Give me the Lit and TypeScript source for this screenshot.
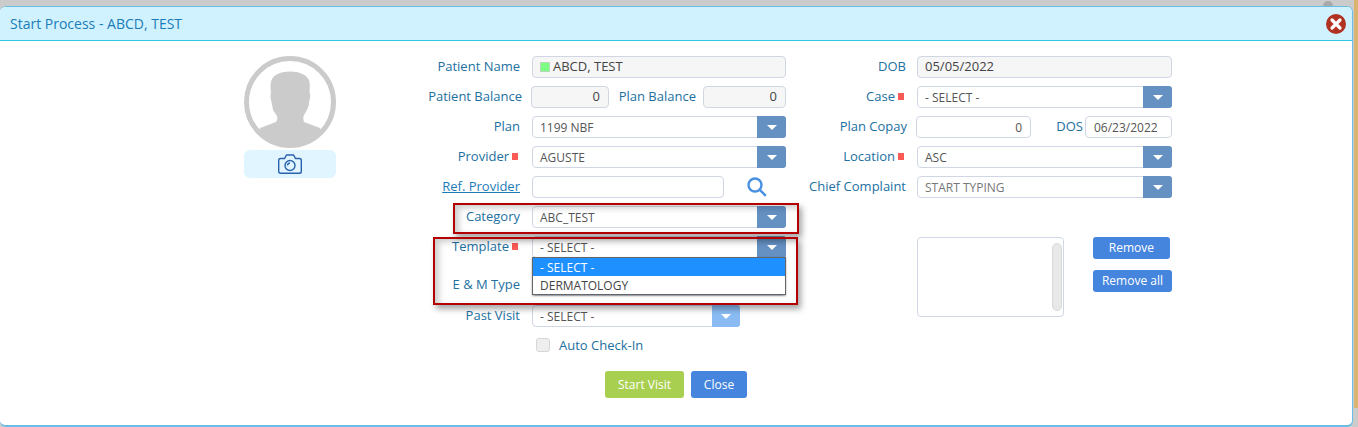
import { LitElement, html, css } from "lit";
import { customElement } from "lit/decorators.js";

const arrow = html`<span class="arr"><i></i></span>`;

@customElement("app-root")
export class AppRoot extends LitElement {
  static styles = css`
    :host { display: block; position: relative; width: 1358px; height: 427px; overflow: hidden; background: #cbcbcb; font-family: "Open Sans", sans-serif; box-sizing: border-box; padding: 6px 5px 0 0; }
    * { box-sizing: border-box; }
    .strip { position: absolute; right: 0; top: 0; width: 4px; height: 408px; background: #d9b36f; }
    .knob { position: absolute; left: 1323px; top: 1px; width: 10px; height: 10px; border-radius: 50%; background: #a9a9a9; }
    .modal { position: relative; height: 421px; background: #fff; border: solid #6cbde6; border-width: 1px 1px 2px 0; border-radius: 6px; overflow: hidden; }
    .header { height: 34px; background: #d0f2ff; border-bottom: 1px solid #2ec6e0; display: flex; align-items: center; justify-content: space-between; padding: 0 6px 0 10px; color: #1c7cb8; font-size: 14px; }
    .x { display: block; width: 20px; height: 20px; margin-top: 1px; }
    .body { display: flex; padding: 15px 0 0 244px; }
    .photo { width: 92px; display: flex; flex-direction: column; gap: 2px; }
    .avatar { display: block; width: 92px; height: 92px; }
    .cam { height: 28px; background: #e0f5ff; border-radius: 6px; display: flex; align-items: center; justify-content: center; }
    .cam svg { display: block; width: 24px; height: 20px; }
    .left { position: relative; width: 366px; margin-left: 84px; }
    .right { width: 363px; margin-left: 23px; }
    .row { display: flex; align-items: center; height: 22px; margin-bottom: 8px; }
    label { color: #22709f; font-size: 13px; white-space: nowrap; display: flex; align-items: center; justify-content: flex-end; padding-bottom: 2px; }
    .l1 { width: 100px; margin-right: 12px; }
    .r1 { width: 97px; margin-right: 11px; }
    .req::after { content: ""; width: 6px; height: 7px; background: #fb5a55; margin-left: 3px; margin-right: 2px; }
    .f { height: 22px; border: 1px solid #d0d6e4; border-radius: 4px; background: #fff; color: #555; font-size: 12px; display: flex; align-items: center; padding-left: 7px; position: relative; white-space: nowrap; }
    .ro { background: #f6f6f6; font-size: 13px; padding-bottom: 2px; color: #444; }
    .num { justify-content: flex-end; padding: 0 8px 2px 0; }
    .f.plain { padding: 0 8px 0 0; justify-content: flex-end; }
    .grow { flex: 1; min-width: 0; }
    .arr { position: absolute; right: -1px; top: -1px; bottom: -1px; width: 29px; background: #6490c2; border-radius: 0 3px 3px 0; display: flex; align-items: center; justify-content: center; }
    .arr i { width: 0; height: 0; border: 5px solid transparent; border-top: 5px solid #fff; border-bottom-width: 0; }
    .arr.light { background: #8abcf3; width: 28px; }
    .swatch { width: 10px; height: 10px; background: #7dff83; border: 1px solid #b8d8bc; margin: 2px 3px 0 0; }
    .link { color: #1c7cb8; text-decoration: underline; }
    .search { display: block; width: 20px; height: 20px; margin-left: 23px; }
    .menu { position: absolute; z-index: 3; left: -1px; right: -1px; top: 20px; height: 38px; background: #fff; border: 1px solid #666; box-shadow: 0 1px 2px rgba(0,0,0,.35); color: #444; font-size: 12px; }
    .menu div { height: 18px; line-height: 20px; padding-left: 7px; }
    .menu .sel { background: #1e90ff; color: #fff; }
    .check { display: flex; align-items: center; margin: 0 0 0 116px; height: 20px; }
    .check i { width: 14px; height: 14px; border: 1px solid #d6d6d6; border-radius: 3px; background: #eee; margin-right: 9px; }
    .check span { color: #22709f; font-size: 13px; padding-bottom: 1px; }
    .actions { display: flex; gap: 7px; padding-left: 185px; margin-top: 16px; }
    .btn { border-radius: 3px; height: 27px; color: #fff; font-size: 12px; display: flex; align-items: center; justify-content: center; background: #4585de; }
    .start { width: 79px; background: #a9cf50; }
    .close { width: 56px; }
    .lower { display: flex; margin: 39px 0 0 108px; }
    .list { width: 147px; height: 80px; border: 1px solid #d0d6e4; border-radius: 4px; position: relative; padding: 5px 1px 5px 0; display: flex; justify-content: flex-end; }
    .bar { width: 10px; height: 68px; background: #e8e8e8; border: 1px solid #dadada; border-radius: 5px; }
    .btns { display: flex; flex-direction: column; align-items: flex-start; gap: 11px; margin-left: 29px; }
    .rm { height: 22px; font-size: 12px; padding: 0 9px 2px; min-width: 77px; }
    .note { position: absolute; border: 2px solid #b30000; pointer-events: none; z-index: 4; box-shadow: 3px 4px 6px rgba(0,0,0,.35), inset 4px 3px 6px rgba(0,0,0,.2); }
    .n1 { left: 33px; top: 147px; width: 346px; height: 31px; }
    .n2 { left: 13px; top: 181px; width: 365px; height: 68px; }
  `;

  render() {
    return html`
      <div class="strip"></div>
      <div class="knob"></div>
      <div class="modal">
        <div class="header">
          <span>Start Process - ABCD, TEST</span>
          <svg class="x" viewBox="0 0 20 20"><circle cx="10" cy="10" r="10" fill="#b23222"/><path d="M6 6l8 8M14 6l-8 8" stroke="#fff" stroke-width="3.2" stroke-linecap="round"/></svg>
        </div>
        <div class="body">
          <div class="photo">
            <svg class="avatar" viewBox="0 0 92 92">
              <defs><clipPath id="c"><circle cx="46" cy="46" r="44"/></clipPath></defs>
              <circle cx="46" cy="46" r="43.5" fill="#fff" stroke="#cbcbcb" stroke-width="5"/>
              <path clip-path="url(#c)" fill="#cbcbcb" d="M16 72L32 66Q34 63 33 60L29 54Q28 48 27 44Q26 40 27 36Q26 30 27 26Q29 16 46 15.5Q63 16 65.5 26Q66 30 65.5 36Q67 40 65.5 44Q65 50 63 54L59.5 60Q59 63 60 66L76 72L80 92L12 92Z"/>
            </svg>
            <div class="cam">
              <svg viewBox="0 0 24 20" fill="none" stroke="#2a62ad" stroke-width="1.4"><path d="M2.5 4.5H6.5L8.5 1H15.5L17.5 4.5H21.5Q23.3 4.5 23.3 6.3V17.5Q23.3 19.3 21.5 19.3H2.5Q0.7 19.3 0.7 17.5V6.3Q0.7 4.5 2.5 4.5Z"/><circle cx="12" cy="11.5" r="5"/><path d="M9.5 11.5Q9.7 9.2 12 9"/></svg>
            </div>
          </div>

          <div class="left">
            <div class="row"><label class="l1">Patient Name</label><div class="f ro grow"><span class="swatch"></span>ABCD, TEST</div></div>
            <div class="row"><label style="width:102px;margin-right:9px">Patient Balance</label><div class="f ro num" style="width:78px">0</div><label style="width:87px;margin-right:7px">Plan Balance</label><div class="f ro num grow">0</div></div>
            <div class="row"><label class="l1">Plan</label><div class="f grow">1199 NBF${arrow}</div></div>
            <div class="row"><label class="l1 req">Provider</label><div class="f grow">AGUSTE${arrow}</div></div>
            <div class="row"><label class="l1"><span class="link">Ref. Provider</span></label><div class="f" style="width:192px"></div>
              <svg class="search" viewBox="0 0 20 20" fill="none" stroke="#4a90e2" stroke-width="2.4"><circle cx="8" cy="8" r="6.5"/><path d="M12.8 12.8L18.8 18.8"/></svg></div>
            <div class="row"><label class="l1">Category</label><div class="f grow">ABC_TEST${arrow}</div></div>
            <div class="row"><label class="l1 req">Template</label><div class="f grow">- SELECT -${arrow}
              <div class="menu"><div class="sel">- SELECT -</div><div>DERMATOLOGY</div></div></div></div>
            <div class="row" style="margin-top:16px"><label class="l1">E &amp; M Type</label><div class="f grow"></div></div>
            <div class="row" style="margin-top:9px;margin-bottom:8px"><label class="l1">Past Visit</label><div class="f" style="width:208px">- SELECT -<span class="arr light"><i></i></span></div></div>
            <div class="check"><i></i><span>Auto Check-In</span></div>
            <div class="actions"><div class="btn start">Start Visit</div><div class="btn close">Close</div></div>
            <div class="note n1"></div>
            <div class="note n2"></div>
          </div>

          <div class="right">
            <div class="row"><label class="r1">DOB</label><div class="f ro grow">05/05/2022</div></div>
            <div class="row"><label class="r1 req">Case</label><div class="f grow">- SELECT -${arrow}</div></div>
            <div class="row"><label style="width:98px;margin-right:9px">Plan Copay</label><div class="f plain" style="width:115px">0</div><label style="width:52px;margin-right:2px">DOS</label><div class="f grow" style="padding-left:8px">06/23/2022</div></div>
            <div class="row"><label class="r1 req">Location</label><div class="f grow">ASC${arrow}</div></div>
            <div class="row"><label class="r1">Chief Complaint</label><div class="f grow" style="color:#777">START TYPING${arrow}</div></div>
            <div class="lower">
              <div class="list"><div class="bar"></div></div>
              <div class="btns"><div class="btn rm">Remove</div><div class="btn rm">Remove all</div></div>
            </div>
          </div>
        </div>
      </div>
    `;
  }
}
